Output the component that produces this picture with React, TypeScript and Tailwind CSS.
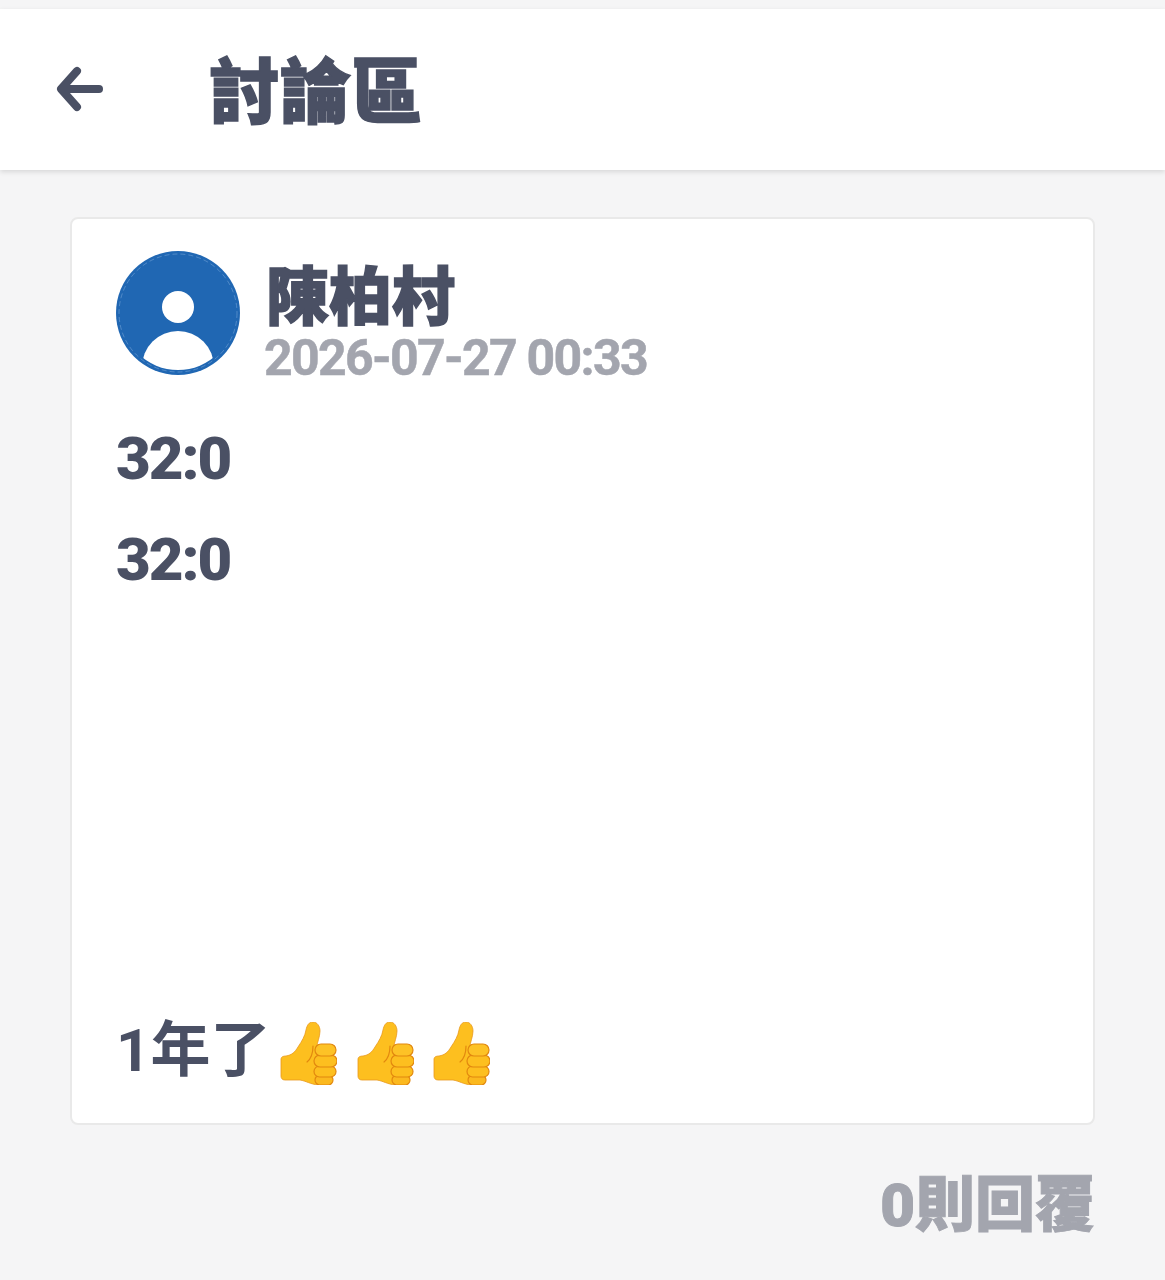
const cjk = { fontFamily: '"Roboto", "Noto Sans CJK TC", sans-serif' };

function ThumbsUp() {
  return (
    <svg viewBox="0 0 57 63" className="h-[63px] w-[57px] shrink-0">
      {/* hand and thumb */}
      <path
        d="M1 37 C1 35 3 34 6 34 C12 33 15 30 18 25 C22 19 25 14 26 8 C27 3 29 0 33 0 C37 0 40 4 40 9 C40 15 37 20 37 25 L38 63 C30 62 26 59 20 58 L5 58 C2 58 1 56 1 54 Z"
        fill="#fdbf1f"
        stroke="#e8981c"
        strokeWidth="0.8"
      />
      <path d="M33 24 C33 30 32 36 27 40" fill="none" stroke="#e2880f" strokeWidth="1.200" strokeLinecap="round" />
      {/* fingers */}
      <rect x="35" y="53" width="18" height="10" rx="5" fill="#fbb91f" stroke="#e2880f" strokeWidth="1.200" />
      <rect x="34" y="44" width="22" height="11" rx="5.500" fill="#fdbf1f" stroke="#e2880f" strokeWidth="1.200" />
      <rect x="34" y="33" width="23" height="12" rx="6" fill="#fdbf1f" stroke="#e2880f" strokeWidth="1.200" />
      <rect x="35" y="22" width="21" height="12" rx="6" fill="#fdc226" stroke="#e2880f" strokeWidth="1.200" />
    </svg>
  );
}

function Avatar() {
  return (
    <svg viewBox="0 0 124 124" className="h-[124px] w-[124px] shrink-0">
      <defs>
        <clipPath id="avatar-clip">
          <circle cx="62" cy="62" r="57" />
        </clipPath>
      </defs>
      <circle cx="62" cy="62" r="62" fill="#2067b3" />
      <circle cx="62" cy="62" r="59" fill="none" stroke="#6fa0d6" strokeOpacity="0.6" strokeWidth="1" strokeDasharray="5 3" />
      <circle cx="62" cy="56" r="16" fill="#fff" />
      <ellipse cx="62" cy="116" rx="36" ry="36" fill="#fff" clipPath="url(#avatar-clip)" />
    </svg>
  );
}

export default function App() {
  return (
    <div className="min-h-[1280px] bg-[#f5f5f6] pt-[9px] text-[#4a5064]" style={cjk}>
      <header className="flex h-[161px] items-center bg-white pt-[5px] pl-[52px] shadow-[0_2px_5px_rgba(0,0,0,0.12)]">
        <svg viewBox="0 0 52 48" className="h-[48px] w-[52px] -translate-y-[3px]" fill="none" stroke="#4a5064" strokeWidth="8" strokeLinecap="round" strokeLinejoin="round">
          <path d="M25 6 L9 24 L25 42" />
          <path d="M10 24 H47" />
        </svg>
        <h1 className="ml-[105px] text-[71px] leading-none font-black [-webkit-text-stroke:1.5px_#4a5064]">討論區</h1>
      </header>

      <main className="mx-[70px] pt-[47px]">
        <section className="h-[908px] rounded-[8px] border-2 border-[#e9e9e9] bg-white px-[44px] pt-[32px]">
          <div className="flex items-start gap-[26px]">
            <Avatar />
            <div className="mt-[14px] flex flex-col">
              <span className="text-[63px] leading-[66px] font-black [-webkit-text-stroke:1.5px_#4a5064]">陳柏村</span>
              <span className="-ml-[2px] text-[50px] leading-[54px] font-bold tracking-[-1.7px] text-[#a3a5ae] [-webkit-text-stroke:0.5px_#a3a5ae]">2026-07-27 00:33</span>
            </div>
          </div>

          <p className="mt-[24px] text-[60px] leading-[100px] font-black tracking-[-2px]">32:0</p>
          <p className="text-[60px] leading-[101px] font-black tracking-[-2px]">32:0</p>
          <p className="mt-[401px] flex items-center text-[60px] leading-[80px] font-bold">
            <span>1年了</span>
            <span className="ml-[10px] flex gap-[19.500px] pt-[5px]">
              <ThumbsUp />
              <ThumbsUp />
              <ThumbsUp />
            </span>
          </p>
        </section>

        <p className="mt-[46px] text-right text-[60px] leading-[70px] font-black text-[#a3a5ae] [-webkit-text-stroke:1px_#a3a5ae]">0則回覆</p>
      </main>
    </div>
  );
}
